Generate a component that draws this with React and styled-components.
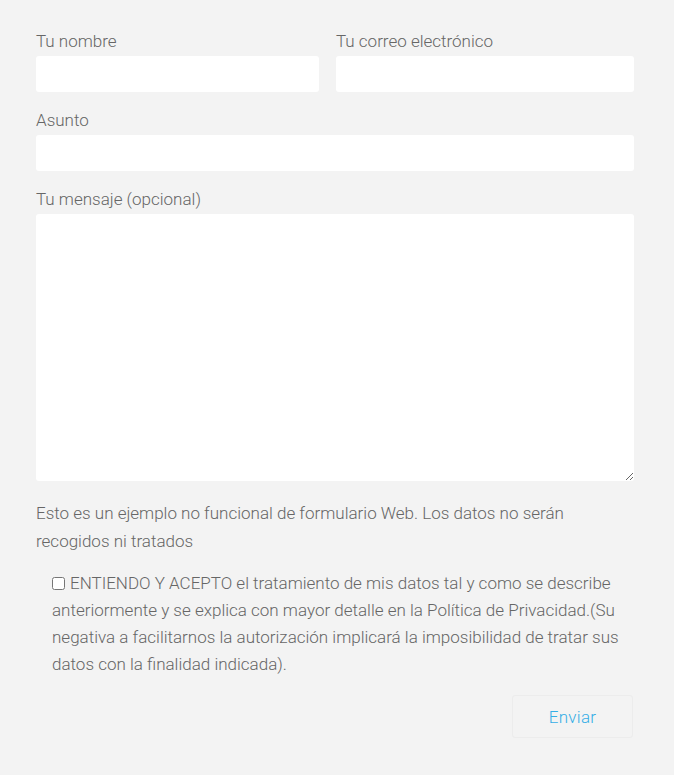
import React from "react"
import styled, { createGlobalStyle } from "styled-components"

const GlobalStyle = createGlobalStyle`
  html, body {
    margin: 0;
    background: #f3f3f3;
  }
  body {
    font-family: Roboto, "Noto Sans", sans-serif;
    font-weight: 300;
    color: #666;
  }
`

const Form = styled.form`
  width: 598px;
  padding: 28px 40px 36px 36px;
  display: flex;
  flex-direction: column;
`

const Row = styled.div`
  display: grid;
  grid-template-columns: 283px 298px;
  column-gap: 17px;
`

const Field = styled.label`
  display: flex;
  flex-direction: column;
  gap: 2px;
  margin-bottom: 15px;
`

const Label = styled.span`
  font-size: 17px;
  line-height: 26px;
  color: #666;
`

const Input = styled.input`
  height: 36px;
  box-sizing: border-box;
  border: none;
  border-radius: 3px;
  background: #fff;
  padding: 0 10px;
  font: inherit;
  outline: none;
`

const TextArea = styled.textarea`
  height: 267px;
  box-sizing: border-box;
  border: none;
  border-radius: 3px;
  background: #fff;
  padding: 10px;
  font: inherit;
  outline: none;
`

const Note = styled.p`
  margin: 3px 0 15px;
  font-size: 17px;
  line-height: 28px;
`

const Consent = styled.label`
  display: block;
  padding: 0 0 0 16px;
  font-size: 17px;
  line-height: 27px;
`

const Check = styled.input`
  width: 13px;
  height: 13px;
  margin: 0 5px 0 0;
  vertical-align: -1px;
`

const Actions = styled.div`
  display: flex;
  justify-content: flex-end;
  margin-top: 17px;
`

const Button = styled.button`
  width: 121px;
  height: 43px;
  margin-right: 1px;
  border: 1px solid #ececec;
  border-radius: 3px;
  background: #f3f3f3;
  color: #35aee6;
  font-family: Roboto, sans-serif;
  font-weight: 300;
  font-size: 17px;
  letter-spacing: 0.3px;
`

export default function App() {
  return (
    <>
      <GlobalStyle />
      <Form onSubmit={e => e.preventDefault()}>
        <Row>
          <Field>
            <Label>Tu nombre</Label>
            <Input type="text" />
          </Field>
          <Field>
            <Label>Tu correo electrónico</Label>
            <Input type="email" />
          </Field>
        </Row>
        <Field>
          <Label>Asunto</Label>
          <Input type="text" />
        </Field>
        <Field>
          <Label>Tu mensaje (opcional)</Label>
          <TextArea />
        </Field>
        <Note>
          Esto es un ejemplo no funcional de formulario Web. Los datos no serán
          recogidos ni tratados
        </Note>
        <Consent>
          <Check type="checkbox" />
          ENTIENDO Y ACEPTO el tratamiento de mis datos tal y como se describe
          anteriormente y se explica con mayor detalle en la Política de
          Privacidad.(Su negativa a facilitarnos la autorización implicará la
          imposibilidad de tratar sus datos con la finalidad indicada).
        </Consent>
        <Actions>
          <Button type="submit">Enviar</Button>
        </Actions>
      </Form>
    </>
  )
}
